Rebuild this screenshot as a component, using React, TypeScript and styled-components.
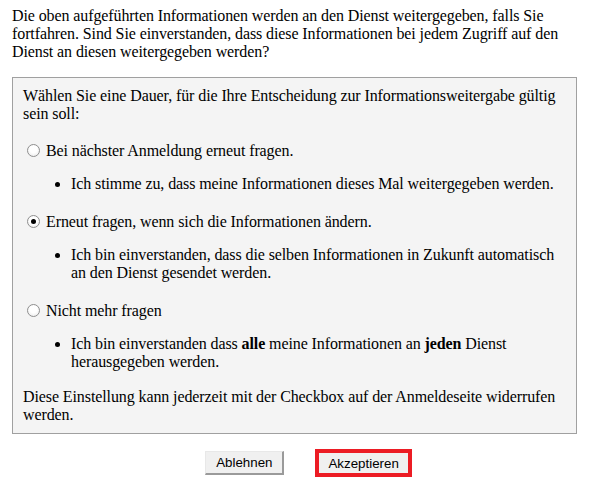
import styled, { createGlobalStyle } from 'styled-components';

const GlobalStyle = createGlobalStyle`
  html, body {
    margin: 0;
    padding: 0;
    background: #ffffff;
  }

  body {
    font-family: "Liberation Serif", "Times New Roman", serif;
    font-size: 16px;
    line-height: 18px;
    color: #000000;
    letter-spacing: -0.1px;
  }
`;

type Option = {
  id: string;
  label: string;
  checked: boolean;
  note: React.ReactNode;
};

const options: Option[] = [
  {
    id: 'ask-next',
    label: 'Bei nächster Anmeldung erneut fragen.',
    checked: false,
    note: 'Ich stimme zu, dass meine Informationen dieses Mal weitergegeben werden.',
  },
  {
    id: 'ask-change',
    label: 'Erneut fragen, wenn sich die Informationen ändern.',
    checked: true,
    note: 'Ich bin einverstanden, dass die selben Informationen in Zukunft automatisch an den Dienst gesendet werden.',
  },
  {
    id: 'never',
    label: 'Nicht mehr fragen',
    checked: false,
    note: (
      <>
        {'Ich bin einverstanden dass '}
        <b>alle</b>
        {' meine Informationen an '}
        <b>jeden</b>
        {' Dienst '}
        {'herausgegeben werden.'}
      </>
    ),
  },
];

export default function App() {
  return (
    <>
      <GlobalStyle />
      <Page>
        <Intro>
          Die oben aufgeführten Informationen werden an den Dienst weitergegeben, falls Sie
          fortfahren. Sind Sie einverstanden, dass diese Informationen bei jedem Zugriff auf den
          Dienst an diesen weitergegeben werden?
        </Intro>

        <Panel>
          <PanelIntro>
            Wählen Sie eine Dauer, für die Ihre Entscheidung zur Informationsweitergabe gültig
            sein soll:
          </PanelIntro>

          {options.map((o) => (
            <OptionBlock key={o.id}>
              <OptionRow htmlFor={o.id}>
                <Radio type="radio" id={o.id} name="duration" defaultChecked={o.checked} />
                {o.label}
              </OptionRow>
              <Notes>
                <li>{o.note}</li>
              </Notes>
            </OptionBlock>
          ))}

          <Footer>
            Diese Einstellung kann jederzeit mit der Checkbox auf der Anmeldeseite widerrufen
            werden.
          </Footer>
        </Panel>

        <Actions>
          <Button type="button">Ablehnen</Button>
          <Button type="button" $highlight>
            Akzeptieren
          </Button>
        </Actions>
      </Page>
    </>
  );
}

const Page = styled.div`
  width: 565px;
  padding: 7px 0 0 12px;
`;

const Intro = styled.p`
  margin: 0 0 16px;
`;

const Panel = styled.div`
  border: 1px solid #a0a0a0;
  background: #f4f4f4;
  padding: 9px 10px 9px;
`;

const PanelIntro = styled.p`
  margin: 0 0 18px;
`;

const OptionBlock = styled.div`
  margin-bottom: 19px;

  &:last-of-type {
    margin-bottom: 17px;
  }
`;

const OptionRow = styled.label`
  display: block;
`;

const Radio = styled.input`
  appearance: none;
  width: 13px;
  height: 13px;
  margin: 3px 6px 0 4px;
  vertical-align: -1px;
  border: 1px solid #8f8f8f;
  border-radius: 50%;
  background: radial-gradient(circle at 50% 40%, #ffffff 40%, #e6e6e6 100%);
  box-sizing: border-box;
  position: relative;

  &:checked::after {
    content: '';
    position: absolute;
    left: 3px;
    top: 3px;
    width: 5px;
    height: 5px;
    border-radius: 50%;
    background: #000000;
  }
`;

const Notes = styled.ul`
  margin: 15px 0 0;
  padding: 0 0 0 48px;
  list-style: disc;
`;

const Footer = styled.p`
  margin: 0;
`;

const Actions = styled.div`
  display: flex;
  align-items: center;
  justify-content: center;
  gap: 31px;
  margin-top: 15px;
  padding-left: 28px;
`;

const Button = styled.button<{ $highlight?: boolean }>`
  font-family: "Liberation Sans", Arial, sans-serif;
  font-size: 13.33px;
  letter-spacing: 0;
  color: #000000;
  height: ${(p) => (p.$highlight ? '28px' : '24px')};
  padding: 0 ${(p) => (p.$highlight ? '9px' : '10px')};
  background: #f0f0f0;
  border-style: solid;
  border-width: 1px 2px 2px 1px;
  border-color: #e8e8e8 #9a9a9a #9a9a9a #e8e8e8;
  ${(p) => p.$highlight && 'border: 4px solid #ec1c24;'}
  border-radius: 0;
`;
